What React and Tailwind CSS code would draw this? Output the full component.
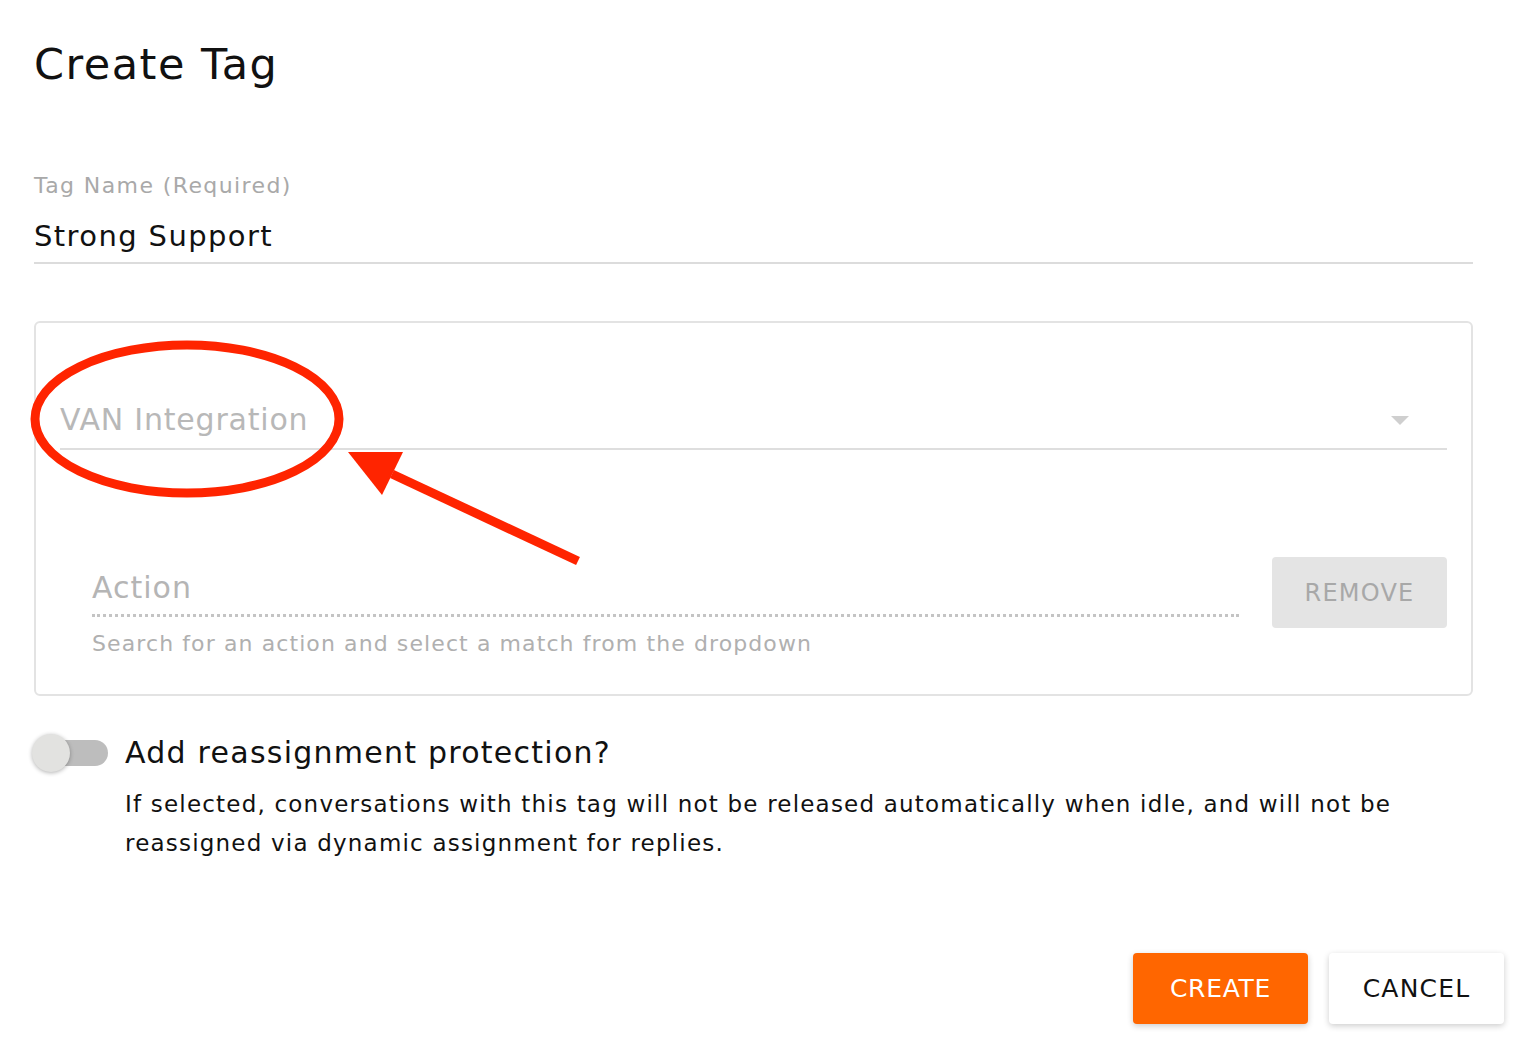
import React from "react";

export default function App() {
  return (
    <div className="relative w-[1518px] h-[1038px] bg-white font-['DejaVu_Sans',sans-serif] overflow-hidden">
      <div className="flex flex-col pl-[34px] pr-[45px] pt-[40px]">
        <h1 className="text-[43px] leading-[48px] text-[#111] font-normal tracking-[1.5px]">Create Tag</h1>

        <div className="mt-[84px] text-[22px] leading-[28px] text-[#a9a9a9] tracking-[1.4px]">Tag Name (Required)</div>
        <div className="mt-[18px] pb-[8px] border-b-2 border-[#dcdcdc] text-[29px] leading-[36px] text-[#111] tracking-[1.4px]">
          Strong Support
        </div>

        <div className="mt-[57px] border-2 border-[#e3e3e3] rounded-[6px] pl-[24px] pr-[24px] pt-[77px] pb-[36px]">
          <div className="flex items-center justify-between pb-[8px] border-b-2 border-[#dedede]">
            <span className="text-[30px] leading-[40px] text-[#b8b8b8] tracking-[0.8px]">VAN Integration</span>
            <span className="mr-[38px] w-0 h-0 border-l-[9px] border-r-[9px] border-t-[9px] border-l-transparent border-r-transparent border-t-[#cfcfcf]" />
          </div>

          <div className="mt-[107px] flex items-start pl-[32px]">
            <div className="flex-1 mt-[11px]">
              <div className="pb-[6px] border-b-[3px] border-dotted border-[#c4c4c4] text-[30px] leading-[40px] text-[#b5b5b5] tracking-[1px]">
                Action
              </div>
              <div className="mt-[13px] text-[22px] leading-[28px] text-[#b0b0b0] tracking-[1.1px]">
                Search for an action and select a match from the dropdown
              </div>
            </div>
            <button className="ml-[33px] w-[175px] h-[71px] rounded-[4px] bg-[#e4e4e4] text-[24px] text-[#a8a8a8] tracking-[1.2px]">
              REMOVE
            </button>
          </div>
        </div>

        <div className="mt-[37px] flex items-start">
          <div className="relative w-[76px] h-[40px] -ml-[2px] shrink-0">
            <div className="absolute left-[14px] top-[7px] w-[62px] h-[26px] rounded-full bg-[#bdbdbd]" />
            <div className="absolute left-[0px] top-[1px] w-[38px] h-[38px] rounded-full bg-[#e2e2e0] shadow-[0_1px_4px_rgba(0,0,0,0.3)]" />
          </div>
          <div className="ml-[17px] flex flex-col">
            <div className="text-[30px] leading-[40px] text-[#111] tracking-[1.25px]">Add reassignment protection?</div>
            <p className="mt-[12px] text-[23px] leading-[39px] text-[#111] tracking-[1.2px] whitespace-nowrap">
              If selected, conversations with this tag will not be released automatically when idle, and will not be
              <br />
              reassigned via dynamic assignment for replies.
            </p>
          </div>
        </div>
      </div>

      <div className="mt-[90px] flex justify-end gap-[21px] pr-[14px]">
        <button className="w-[175px] h-[71px] rounded-[4px] bg-[#ff6600] text-white text-[25px] tracking-[0.7px] shadow-[0_2px_6px_rgba(0,0,0,0.2)]">
          CREATE
        </button>
        <button className="w-[175px] h-[71px] rounded-[4px] bg-white text-[#111] text-[25px] tracking-[1.2px] shadow-[0_2px_6px_rgba(0,0,0,0.2)]">
          CANCEL
        </button>
      </div>

      <svg className="absolute inset-0 pointer-events-none" width="1518" height="1038" viewBox="0 0 1518 1038">
        <ellipse cx="187" cy="419" rx="152" ry="74" fill="none" stroke="#ff2400" strokeWidth="9" />
        <line x1="392" y1="474" x2="578" y2="561" stroke="#ff2400" strokeWidth="9" />
        <polygon points="348,452 403,452 382,495" fill="#ff2400" />
      </svg>
    </div>
  );
}
